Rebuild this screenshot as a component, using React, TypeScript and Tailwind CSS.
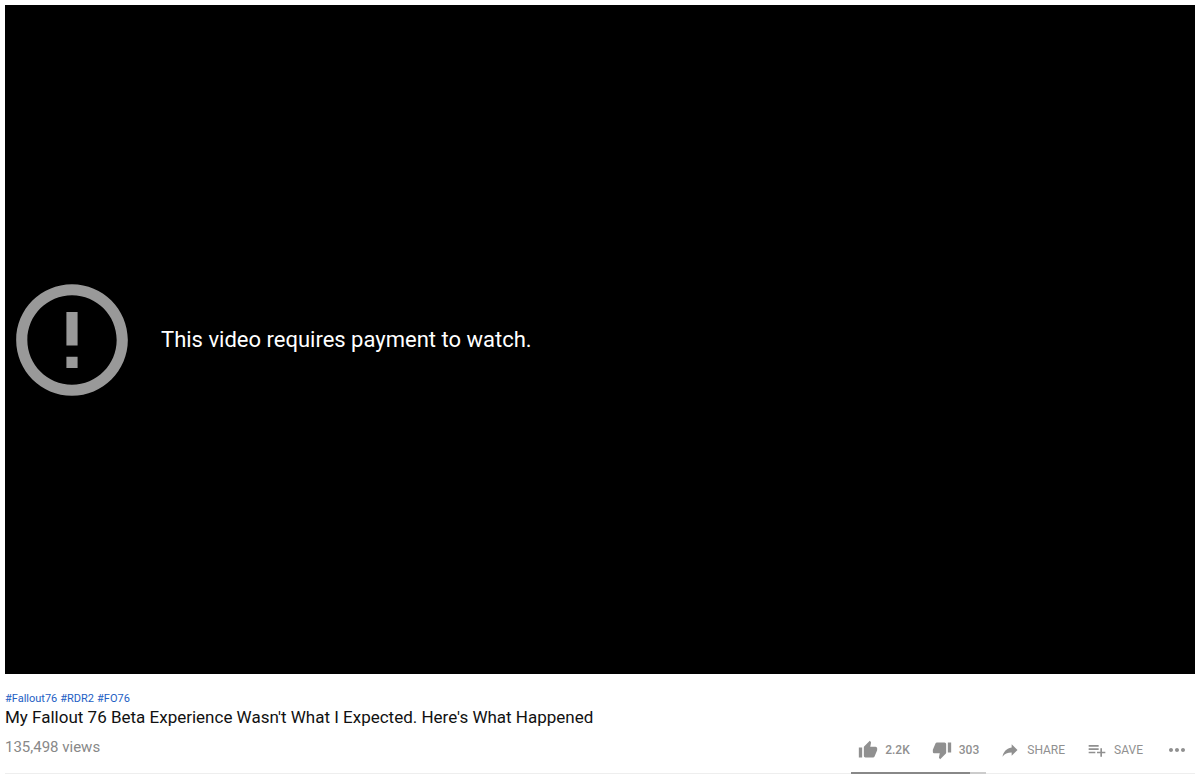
import React from 'react';

interface IconProps {
  path: string;
  className?: string;
}

const icons = {
  alert:
    'M11 15h2v2h-2zm0-8h2v6h-2zm.99-5C6.47 2 2 6.48 2 12s4.47 10 9.99 10C17.52 22 22 17.52 22 12S17.52 2 11.99 2zM12 20c-4.42 0-8-3.58-8-8s3.58-8 8-8 8 3.58 8 8-3.58 8-8 8z',
  like: 'M1 21h4V9H1v12zm22-11c0-1.1-.9-2-2-2h-6.31l.95-4.57.03-.32c0-.41-.17-.79-.44-1.06L14.17 1 7.59 7.59C7.22 7.95 7 8.45 7 9v10c0 1.1.9 2 2 2h9c.83 0 1.54-.5 1.84-1.22l3.02-7.05c.09-.23.14-.47.14-.73v-2z',
  dislike:
    'M15 3H6c-.83 0-1.54.5-1.84 1.22l-3.02 7.05c-.09.23-.14.47-.14.73v2c0 1.1.9 2 2 2h6.31l-.95 4.57-.03.32c0 .41.17.79.44 1.06L9.83 23l6.59-6.59c.36-.36.58-.86.58-1.41V5c0-1.1-.9-2-2-2zm4 0v12h4V3h-4z',
  share: 'M14 9V5l7 7-7 7v-4.1c-5 0-8.5 1.6-11 5.1 1-5 4-10 11-11z',
  save: 'M14 10H2v2h12v-2zm0-4H2v2h12V6zm4 8v-4h-2v4h-4v2h4v4h2v-4h4v-2h-4zM2 16h8v-2H2v2z',
  more: 'M6 10c-1.1 0-2 .9-2 2s.9 2 2 2 2-.9 2-2-.9-2-2-2zm12 0c-1.1 0-2 .9-2 2s.9 2 2 2 2-.9 2-2-.9-2-2-2zm-6 0c-1.1 0-2 .9-2 2s.9 2 2 2 2-.9 2-2-.9-2-2-2z',
};

const Icon: React.FC<IconProps> = ({ path, className = 'size-5' }) => (
  <svg viewBox="0 0 24 24" fill="currentColor" aria-hidden="true" className={`${className} shrink-0`}>
    <path d={path} />
  </svg>
);

const hashtags = ['#Fallout76', '#RDR2', '#FO76'];

const likes = 2200;
const dislikes = 303;

export default function App() {
  return (
    <main className="bg-white px-[5px] pt-[5px] font-[Roboto,sans-serif]">
      {/* Player */}
      <section className="flex aspect-video items-center bg-black">
        <Icon path={icons.alert} className="size-[134px] text-[#999999]" />
        <p className="ml-[22px] text-[22px] leading-7 text-white">
          This video requires payment to watch.
        </p>
      </section>

      {/* Video info */}
      <section className="border-b border-[#eeeeee] pt-[17px]">
        <div className="flex gap-[3px] text-[11px] leading-4 text-[#2360c4]">
          {hashtags.map((tag) => (
            <a key={tag} href={`/hashtag/${tag.slice(1)}`}>
              {tag}
            </a>
          ))}
        </div>
        <h1 className="text-[17px] leading-5 text-[#111111]">
          My Fallout 76 Beta Experience Wasn't What I Expected. Here's What Happened
        </h1>

        <div className="flex items-start justify-between">
          <span className="pt-[10px] text-[15px] leading-5 text-[#888888]">135,498 views</span>

          <div className="flex pt-[5px] pr-[6px] text-xs text-[#909090]">
            <div className="-mb-px mr-[14px]">
              <div className="flex h-9 items-center gap-[22px] px-[7px]">
                <button type="button" aria-label="Like" className="flex items-center gap-[7px] font-medium">
                  <Icon path={icons.like} />
                  2.2K
                </button>
                <button type="button" aria-label="Dislike" className="flex items-center gap-[7px] font-medium">
                  <Icon path={icons.dislike} />
                  303
                </button>
              </div>
              <div className="mt-1 h-[2px] bg-[#cccccc]">
                <div
                  className="h-full bg-[#888888]"
                  style={{ width: `${(likes / (likes + dislikes)) * 100}%` }}
                />
              </div>
            </div>
            <div className="flex h-9 items-center gap-[22px]">
              <button type="button" className="flex items-center gap-[7px]">
                <Icon path={icons.share} />
                SHARE
              </button>
              <button type="button" className="flex items-center gap-[7px]">
                <Icon path={icons.save} />
                SAVE
              </button>
              <button type="button" aria-label="More actions">
                <Icon path={icons.more} className="size-6" />
              </button>
            </div>
          </div>
        </div>
      </section>
    </main>
  );
}
